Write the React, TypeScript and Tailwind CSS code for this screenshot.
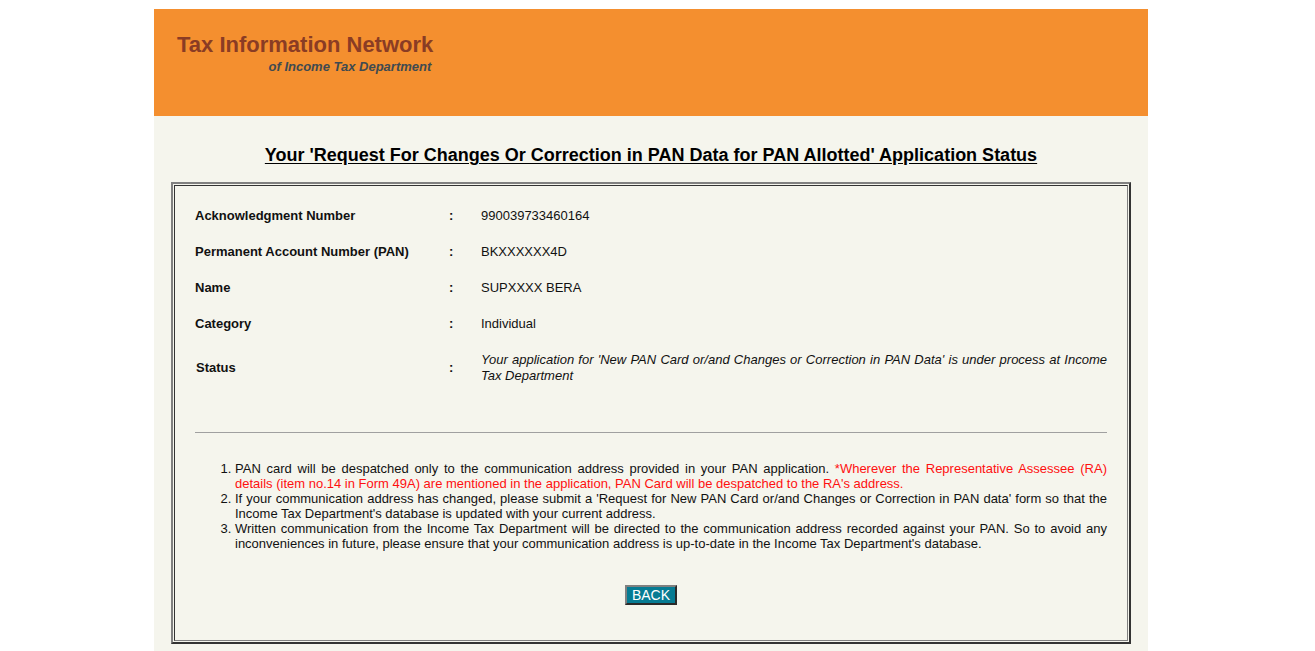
const rows = [
  { label: "Acknowledgment Number", value: "990039733460164" },
  { label: "Permanent Account Number (PAN)", value: "BKXXXXXX4D" },
  { label: "Name", value: "SUPXXXX BERA" },
  { label: "Category", value: "Individual" },
];

export default function App() {
  return (
    <div className="min-h-[651px] bg-white pt-[9px] font-['Liberation_Sans',Arial,sans-serif]">
      <div className="ml-[154px] w-[994px] bg-[#f5f5ed]">
        {/* header band */}
        <div className="h-[107px] bg-[#f48f2f] pl-[23px] pt-[25px]">
          <div className="inline-block">
            <div className="text-[22px] font-bold leading-none text-[#8a3c24]">
              Tax Information Network
            </div>
            <div className="mt-[4px] pr-[2px] text-right text-[13px] font-bold italic leading-none text-[#3f4a50]">
              of Income Tax Department
            </div>
          </div>
        </div>

        <div className="pt-[26px] pb-[13px] text-center">
          <span className="text-[18px] font-bold text-black underline underline-offset-[2px]">
            Your 'Request For Changes Or Correction in PAN Data for PAN Allotted' Application Status
          </span>
        </div>

        <div className="px-[17px]">
          <div className="border-2 border-t-[#808080] border-l-[#808080] border-r-[#333] border-b-[#333] p-px">
            <div className="border border-t-[#333] border-l-[#333] border-r-[#808080] border-b-[#808080] pl-[20px] pr-[20px] pt-[12px] pb-[35px]">
              <div className="grid grid-cols-[254px_32px_1fr] text-[13px] text-[#111]">
                {rows.map((r) => (
                  <div key={r.label} className="contents">
                    <div className="flex h-[36px] items-center font-bold">{r.label}</div>
                    <div className="flex h-[36px] items-center font-bold">:</div>
                    <div className="flex h-[36px] items-center">{r.value}</div>
                  </div>
                ))}
                <div className="flex h-[52px] items-center pl-px font-bold">Status</div>
                <div className="flex h-[52px] items-center font-bold">:</div>
                <div className="flex h-[52px] items-center">
                  <p className="text-justify italic leading-[16px]">
                    Your application for 'New PAN Card or/and Changes or Correction in PAN Data' is under process at Income Tax Department
                  </p>
                </div>
              </div>

              <div className="mt-[38px] h-px bg-[#a0a0a0]" />

              <ol className="mt-[28px] list-decimal pl-[40px] text-justify text-[13px] leading-[15px] text-[#111]">
                <li>
                  PAN card will be despatched only to the communication address provided in your PAN application.{" "}
                  <span className="text-[#ff1010]">
                    *Wherever the Representative Assessee (RA) details (item no.14 in Form 49A) are mentioned in the application, PAN Card will be despatched to the RA's address.
                  </span>
                </li>
                <li>
                  If your communication address has changed, please submit a 'Request for New PAN Card or/and Changes or Correction in PAN data' form so that the Income Tax Department's database is updated with your current address.
                </li>
                <li>
                  Written communication from the Income Tax Department will be directed to the communication address recorded against your PAN. So to avoid any inconveniences in future, please ensure that your communication address is up-to-date in the Income Tax Department's database.
                </li>
              </ol>

              <div className="mt-[34px] flex justify-center">
                <button className="h-[20px] w-[52px] border-2 border-t-[#808080] border-l-[#808080] border-r-[#2a2a2a] border-b-[#2a2a2a] bg-[#067b93] text-[14px] leading-none text-white">
                  BACK
                </button>
              </div>
            </div>
          </div>
        </div>
        <div className="h-[10px]" />
      </div>
    </div>
  );
}
